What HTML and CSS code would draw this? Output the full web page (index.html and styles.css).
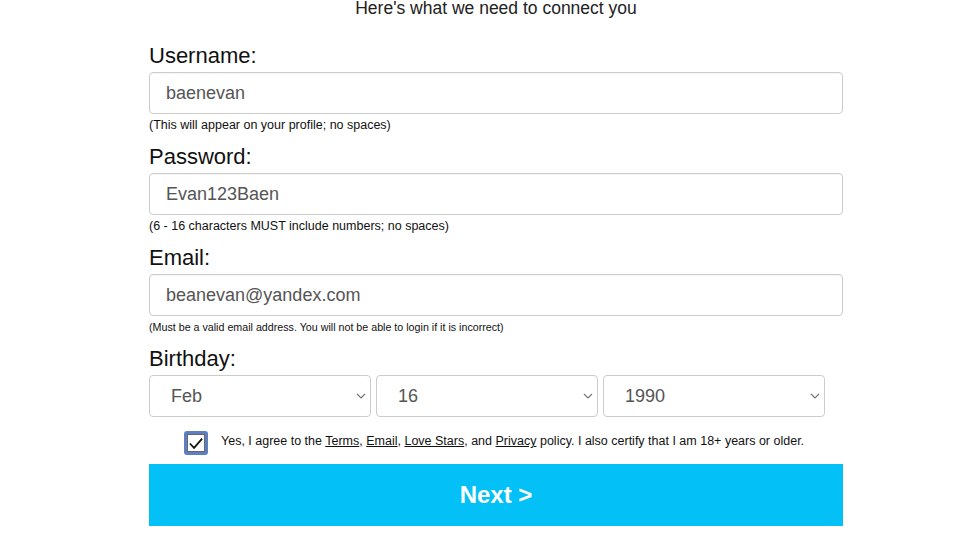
FILE: index.html
```html
<!DOCTYPE html>
<html lang="en">
<head>
<meta charset="utf-8">
<title>Sign up</title>
<link rel="stylesheet" href="styles.css">
</head>
<body>
<div class="page">
  <h2 class="intro">Here's what we need to connect you</h2>
  <form class="form">
    <div class="field">
      <label class="label">Username:</label>
      <input class="input" type="text" value="baenevan">
      <p class="help">(This will appear on your profile; no spaces)</p>
    </div>
    <div class="field">
      <label class="label">Password:</label>
      <input class="input" type="text" value="Evan123Baen">
      <p class="help">(6 - 16 characters MUST include numbers; no spaces)</p>
    </div>
    <div class="field">
      <label class="label">Email:</label>
      <input class="input" type="text" value="beanevan@yandex.com">
      <p class="help help-small">(Must be a valid email address. You will not be able to login if it is incorrect)</p>
    </div>
    <div class="field field-last">
      <label class="label">Birthday:</label>
      <div class="dates">
        <select class="select"><option>Feb</option></select>
        <select class="select"><option>16</option></select>
        <select class="select"><option>1990</option></select>
      </div>
    </div>
    <div class="agree">
      <span class="check-ring"><span class="check-box"><svg viewBox="0 0 16 14"><path d="M1 7 L5.8 12 L15 1.5" fill="none" stroke="#111" stroke-width="2"/></svg></span></span>
      <p class="agree-text">Yes, I agree to the <a href="#">Terms</a>, <a href="#">Email</a>, <a href="#">Love Stars</a>, and <a href="#">Privacy</a> policy. I also certify that I am 18+ years or older.</p>
    </div>
    <button class="next" type="button">Next &gt;</button>
  </form>
</div>
</body>
</html>
```
FILE: styles.css
```css
html, body {
  margin: 0;
  padding: 0;
  background: #fff;
}
body {
  font-family: "Liberation Sans", Arial, sans-serif;
  color: #000;
}
.page {
  width: 694px;
  margin-left: 149px;
}
.intro {
  margin: -2px 0 0;
  font-size: 17.5px;
  line-height: 20px;
  font-weight: normal;
  text-align: center;
  color: #222;
}
.form {
  margin-top: 22px;
  display: flex;
  flex-direction: column;
}
.field {
  display: flex;
  flex-direction: column;
  margin-bottom: 9px;
}
.label {
  font-size: 22px;
  line-height: 26px;
  margin-top: 3px;
  margin-bottom: 3px;
  color: #111;
}
.input {
  box-sizing: border-box;
  height: 42px;
  width: 100%;
  border: 1px solid #ccc;
  border-radius: 4px;
  padding: 0 16px;
  font-family: "Liberation Sans", Arial, sans-serif;
  font-size: 18px;
  color: #555;
  outline: none;
  box-shadow: inset 0 1px 1px rgba(0,0,0,0.04);
}
.help {
  margin: 4px 0 0;
  font-size: 12.5px;
  line-height: 14px;
  color: #111;
}
.help-small {
  font-size: 10.7px;
}
.field-last {
  margin-bottom: 14px;
}
.dates {
  display: flex;
  gap: 5px;
}
.select {
  box-sizing: border-box;
  width: 222px;
  height: 42px;
  border: 1px solid #ccc;
  border-radius: 4px;
  padding: 0 21px;
  font-family: "Liberation Sans", Arial, sans-serif;
  font-size: 18px;
  color: #555;
  background: #fff url("data:image/svg+xml,%3Csvg xmlns='http://www.w3.org/2000/svg' width='10' height='6' viewBox='0 0 10 6'%3E%3Cpath d='M1 1 L5 5 L9 1' fill='none' stroke='%23777' stroke-width='1.2'/%3E%3C/svg%3E") no-repeat right 4px center;
  -webkit-appearance: none;
  appearance: none;
  outline: none;
}
.agree {
  display: flex;
  align-items: center;
  gap: 13px;
  padding-left: 35px;
  margin-bottom: 9px;
}
.check-ring {
  box-sizing: border-box;
  width: 24px;
  height: 24px;
  border: 3px solid #5b7fc1;
  border-radius: 3px;
  padding: 0;
  display: flex;
  flex: none;
}
.check-box {
  flex: 1;
  border: 1px solid #666;
  background: #fff;
  display: flex;
  align-items: center;
  justify-content: center;
}
.check-box svg {
  width: 14px;
  height: 13px;
}
.agree-text {
  margin: 0 0 4px;
  font-size: 12.5px;
  line-height: 14px;
  color: #111;
}
.agree-text a {
  color: #111;
  text-decoration: underline;
}
.next {
  height: 62px;
  width: 100%;
  border: none;
  background: #03c1f6;
  color: #fff;
  font-family: "Liberation Sans", Arial, sans-serif;
  font-weight: bold;
  font-size: 24px;
  cursor: pointer;
}
```
